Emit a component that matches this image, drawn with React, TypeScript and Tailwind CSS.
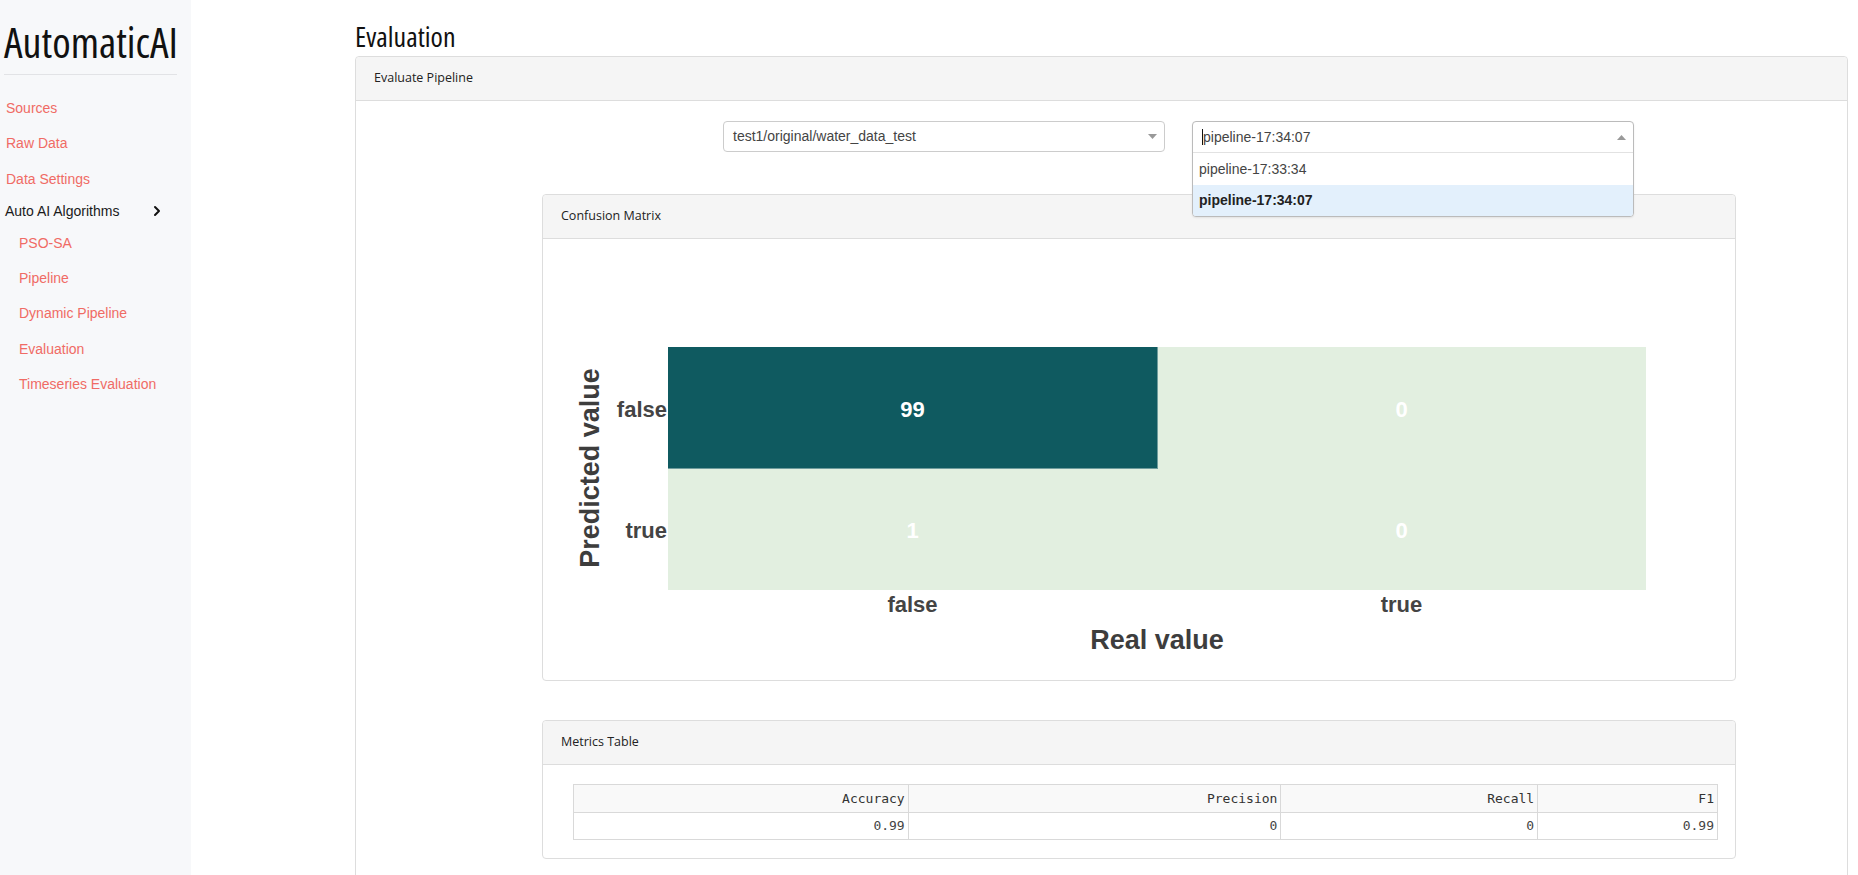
import React from "react";
import { ChevronRight } from "lucide-react";

const narrow = "font-['Open_Sans',sans-serif] [font-stretch:75%]";
const semi = "font-['Open_Sans',sans-serif]";

function NavLink({ label, sub, h = "h-[35px]" }: { label: string; sub?: boolean; h?: string }) {
  return (
    <div className={`${h} flex items-center ${sub ? "pl-[14px]" : "pl-px"}`}>
      <span className="text-[14px] text-[#f06b65]">{label}</span>
    </div>
  );
}

function Sidebar() {
  return (
    <aside className="w-[191px] shrink-0 bg-[#f7f8fa] pl-[5px] pr-[14px] font-['Liberation_Sans',Arial,sans-serif]">
      <div className={`${narrow} font-medium pt-[18px] h-[74px] text-[42px] leading-[48px] text-[#111] -ml-px`}>AutomaticAI</div>
      <div className="h-px bg-[#e2e3e6] w-[173px] -ml-px" />
      <div className="pt-[16px] flex flex-col">
        <NavLink label="Sources" />
        <NavLink label="Raw Data" />
        <NavLink label="Data Settings" h="h-[36px]" />
        <div className="h-[28px] flex items-center justify-between pr-[12px]">
          <span className="text-[14px] text-[#1a1a1a]">Auto AI Algorithms</span>
          <ChevronRight size={16} strokeWidth={3} className="text-[#111]" />
        </div>
        <NavLink label="PSO-SA" sub h="h-[36px]" />
        <NavLink label="Pipeline" sub />
        <NavLink label="Dynamic Pipeline" sub />
        <NavLink label="Evaluation" sub h="h-[36px]" />
        <NavLink label="Timeseries Evaluation" sub />
      </div>
    </aside>
  );
}

function DownArrow() {
  return (
    <svg width="9" height="5" viewBox="0 0 9 5">
      <polygon points="0,0 9,0 4.5,5" fill="#999" />
    </svg>
  );
}
function UpArrow() {
  return (
    <svg width="9" height="5" viewBox="0 0 9 5">
      <polygon points="0,5 9,5 4.5,0" fill="#999" />
    </svg>
  );
}

function ConfusionChart() {
  const f = "'Liberation Sans', Arial, sans-serif";
  return (
    <svg width="1192" height="441" viewBox="0 0 1192 441" className="block">
      <rect x="125" y="108" width="978" height="243" fill="#e2efe0" />
      <rect x="125" y="108" width="489" height="122" fill="#0f5a60" />
      <line x1="614.5" y1="108" x2="614.5" y2="230" stroke="#6f9c9d" strokeWidth="1" />
      <line x1="125" y1="229.5" x2="614" y2="229.5" stroke="#6f9c9d" strokeWidth="1" />
      <g fontFamily={f} fontWeight="700" fontSize="22" textAnchor="middle" dominantBaseline="central" fill="#ffffff">
        <text x="369.5" y="170">99</text>
        <text x="858.5" y="170">0</text>
        <text x="369.5" y="291">1</text>
        <text x="858.5" y="291">0</text>
      </g>
      <g fontFamily={f} fontWeight="700" fontSize="22" dominantBaseline="central" fill="#444444">
        <text x="124" y="170" textAnchor="end">false</text>
        <text x="124" y="291" textAnchor="end">true</text>
        <text x="369.5" y="365" textAnchor="middle">false</text>
        <text x="858.5" y="365" textAnchor="middle">true</text>
      </g>
      <g fontFamily={f} fontWeight="700" fontSize="27" dominantBaseline="central" textAnchor="middle" fill="#3d3d3d">
        <text x="614" y="401">Real value</text>
        <text x="47" y="229" transform="rotate(-90 47 229)">Predicted value</text>
      </g>
    </svg>
  );
}

function Panel({ title, children, className = "" }: { title: string; children: React.ReactNode; className?: string }) {
  return (
    <div className={`border border-[#dddddd] rounded-[4px] bg-white ${className}`}>
      <div className={`h-[44px] bg-[#f5f5f5] border-b border-[#dddddd] rounded-t-[4px] flex items-center pl-[18px] ${semi} text-[12.5px] text-[#222]`}>
        {title}
      </div>
      {children}
    </div>
  );
}

function MetricsTable() {
  const cols = [
    { label: "Accuracy", value: "0.99", w: "w-[335px]" },
    { label: "Precision", value: "0", w: "w-[373px]" },
    { label: "Recall", value: "0", w: "w-[257px]" },
    { label: "F1", value: "0.99", w: "w-[180px]" },
  ];
  return (
    <table className="ml-[30px] w-[1145px] border-collapse font-['DejaVu_Sans_Mono',monospace] text-[13px]">
      <thead>
        <tr className="bg-[#f9f9f9] h-[28px]">
          {cols.map((c) => (
            <th key={c.label} className={`${c.w} border border-[#d9d9d9] text-right font-normal pr-[3px] text-[#333]`}>
              {c.label}
            </th>
          ))}
        </tr>
      </thead>
      <tbody>
        <tr className="h-[27px]">
          {cols.map((c) => (
            <td key={c.label} className="border border-[#d9d9d9] text-right pr-[3px] text-[#444]">
              {c.value}
            </td>
          ))}
        </tr>
      </tbody>
    </table>
  );
}

export default function App() {
  return (
    <div className="flex h-[875px] w-full overflow-hidden bg-white">
      <Sidebar />
      <main className="flex-1 pl-[164px] pr-[10px]">
        <h1 className={`${narrow} font-medium h-[56px] pt-[20px] text-[28px] leading-[32px] text-[#111]`}>Evaluation</h1>
        <div className="border border-[#dddddd] rounded-t-[4px] h-[900px]">
          <div className={`h-[44px] bg-[#f5f5f5] border-b border-[#dddddd] rounded-t-[4px] flex items-center pl-[18px] ${semi} text-[12.5px] text-[#222]`}>
            Evaluate Pipeline
          </div>
          <div className="font-['Liberation_Sans',Arial,sans-serif]">
            <div className="flex pt-[20px] pl-[367px] gap-[27px]">
              <div className="w-[442px] h-[31px] border border-[#cccccc] rounded-[4px] flex items-center justify-between pl-[9px] pr-[7px] text-[14px] text-[#444]">
                <span>test1/original/water_data_test</span>
                <DownArrow />
              </div>
              <div className="relative w-[442px] h-[31px]">
                <div className="absolute left-0 top-0 w-[442px] border border-[#bbbbbb] rounded-[4px] bg-white z-10 shadow-[0_1px_2px_rgba(0,0,0,0.08)]">
                  <div className="h-[31px] border-b border-[#e2e2e2] flex items-center justify-between pl-[9px] pr-[7px] text-[14px] text-[#444]">
                    <span className="flex items-center">
                      <span className="inline-block w-px h-[16px] bg-[#111]" />
                      <span>pipeline-17:34:07</span>
                    </span>
                    <UpArrow />
                  </div>
                  <div className="h-[32px] flex items-center pl-[6px] text-[14px] text-[#444]">pipeline-17:33:34</div>
                  <div className="h-[31px] flex items-center pl-[6px] text-[14px] font-bold text-[#222] bg-[#e3f0fc] rounded-b-[3px]">
                    pipeline-17:34:07
                  </div>
                </div>
              </div>
            </div>
            <Panel title="Confusion Matrix" className="ml-[186px] mt-[42px] w-[1194px]">
              <ConfusionChart />
            </Panel>
            <Panel title="Metrics Table" className="ml-[186px] mt-[39px] w-[1194px]">
              <div className="pt-[19px] pb-[18px]">
                <MetricsTable />
              </div>
            </Panel>
          </div>
        </div>
      </main>
    </div>
  );
}
